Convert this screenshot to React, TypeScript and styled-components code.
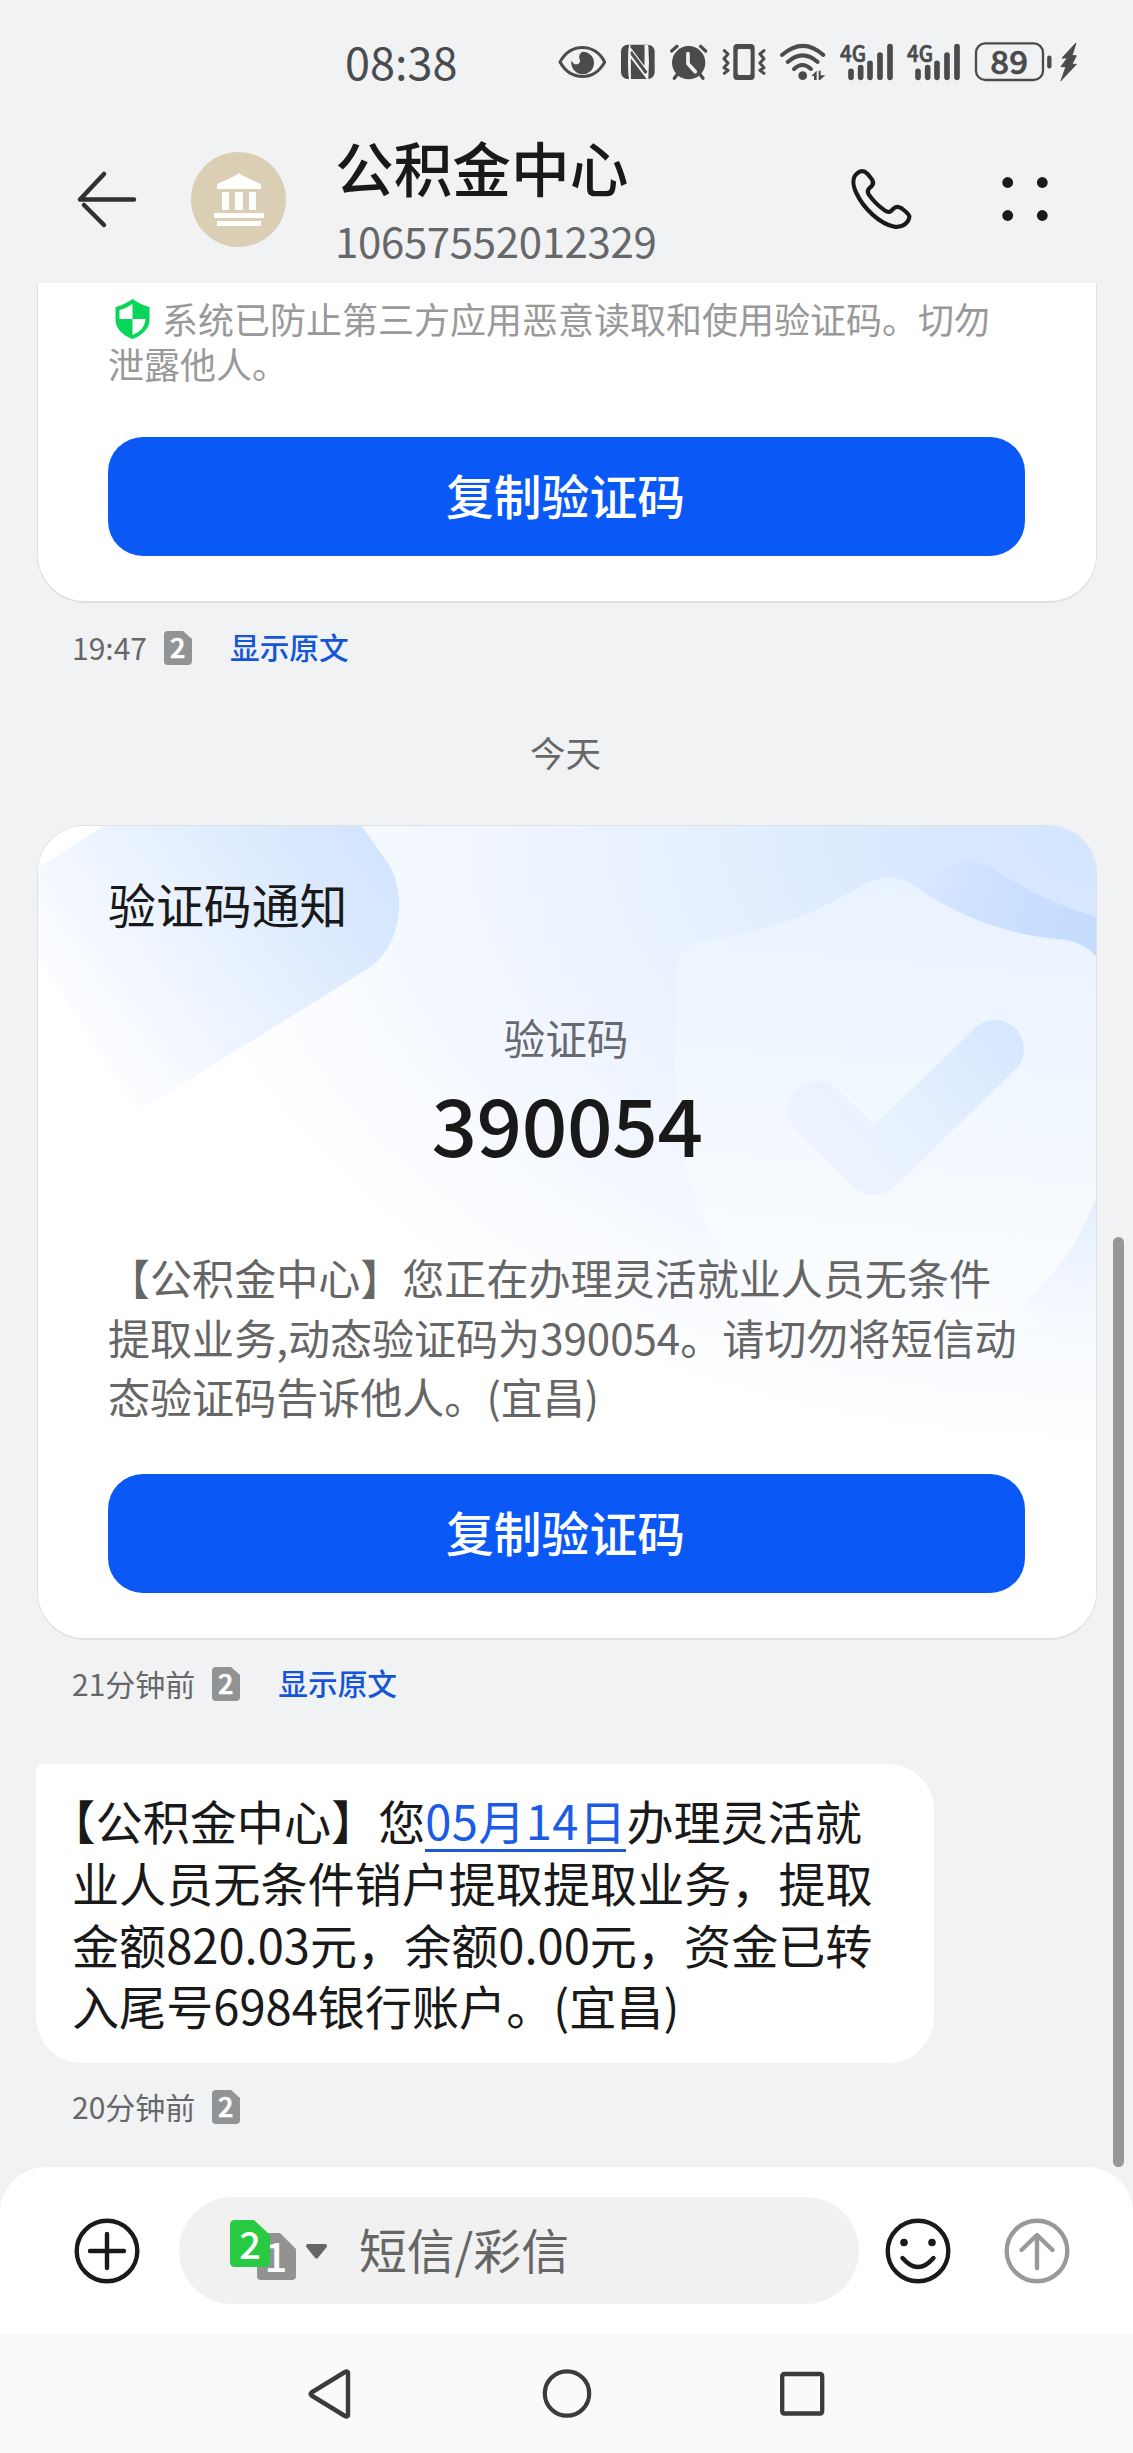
import React from "react";
import styled, { createGlobalStyle } from "styled-components";

const cjk = '"Noto Sans CJK SC", "Noto Sans", sans-serif';

const Global = createGlobalStyle`
  * { box-sizing: border-box; }
  body { margin: 0; background: #f1f2f4; }
  svg { display: block; flex: none; overflow: visible; }
`;

const Screen = styled.main`
  display: flex;
  flex-direction: column;
  width: 1133px;
  height: 2453px;
  overflow: hidden;
  background: #f1f2f4;
  font-family: ${cjk};
  font-weight: 400;
  color: #191919;
  white-space: nowrap;
`;

const StatusBar = styled.div`
  display: flex;
  align-items: flex-start;
  height: 120px;
  padding: 36px 43px 0 345px;
`;

const Clock = styled.div`
  width: 205px;
  height: 52px;
  line-height: 50px;
  font-size: 45px;
  color: #4a4b4d;
`;

const Header = styled.header`
  display: flex;
  align-items: center;
  height: 163px;
  padding-left: 74px;
`;

const BackButton = styled.button`
  padding: 0;
  margin-top: -4px;
  border: 0;
  background: none;
`;

const Avatar = styled.div`
  display: grid;
  place-items: center;
  width: 95px;
  height: 95px;
  margin: -4px 49px 0 55px;
  border-radius: 50%;
  background: #dacfb5;
`;

const Contact = styled.div`
  width: 500px;
  height: 163px;
`;

const Name = styled.h1`
  margin: 11px 0 0;
  font-size: 58.7px;
  font-weight: 500;
  line-height: 72px;
`;

const Phone = styled.div`
  margin-top: 12px;
  font-size: 42px;
  line-height: 50px;
  letter-spacing: -0.35px;
  color: #666769;
`;

const HeaderAction = styled.button<{ $left: number }>`
  padding: 0;
  border: 0;
  background: none;
  margin: -4px 0 0 ${(p) => p.$left}px;
`;

const Thread = styled.section`
  position: relative;
  height: 1884px;
  padding: 0 36px;
  overflow: hidden;
`;

const Card = styled.article<{ $cut?: boolean }>`
  position: relative;
  height: ${(p) => (p.$cut ? 320 : 815)}px;
  padding: ${(p) => (p.$cut ? 13 : 46)}px 70px 0;
  border: 1px solid #dfe1e4;
  border-bottom: 2px solid #e0e1e3;
  border-top-width: ${(p) => (p.$cut ? 0 : 1)}px;
  border-radius: ${(p) => (p.$cut ? "0 0 48px 48px" : "48px")};
  background: #fff;
  overflow: hidden;
  margin-left: 1px;
`;

const CardArt = styled.svg`
  position: absolute;
  left: 0;
  top: 0;
`;

const CardContent = styled.div`
  position: relative;
`;

const Notice = styled.p`
  margin: 0;
  height: 90px;
  font-size: 36px;
  line-height: 45px;
  color: #999;
`;

const InlineShield = styled.span`
  display: inline-block;
  vertical-align: -5px;
  width: 54px;
  padding-left: 7px;
  height: 40px;
`;

const CopyButton = styled.button<{ $gap: number }>`
  display: block;
  width: 917px;
  height: 119px;
  margin: ${(p) => p.$gap}px 0 0;
  padding: 0 2px 5px 0;
  border: 0;
  border-radius: 35px;
  background: #0a59f7;
  color: #fff;
  font-family: ${cjk};
  font-size: 47.8px;
  font-weight: 500;
`;

const CardTitle = styled.h2`
  margin: 0;
  font-size: 47.9px;
  font-weight: 400;
  line-height: 62px;
`;

const CodeLabel = styled.div`
  margin-top: 73px;
  padding-right: 2px;
  text-align: center;
  font-size: 41.7px;
  line-height: 60px;
  color: #666a70;
`;

const Code = styled.div`
  margin-top: 10px;
  text-align: center;
  font-size: 80px;
  font-weight: 500;
  line-height: 90px;
  letter-spacing: -0.4px;
`;

const CardBody = styled.p`
  margin: 80px 0 0;
  font-size: 42.05px;
  line-height: 59.7px;
  color: #666;
`;

const Meta = styled.div<{ $top: number }>`
  display: flex;
  align-items: center;
  height: 36px;
  margin-top: ${(p) => p.$top}px;
  padding-left: 36px;
  font-size: 30px;
  line-height: 36px;
  color: #666769;
`;

const MetaTime = styled.span`
  padding-bottom: 4px;
`;

const SimWrap = styled.span`
  margin: -2px 38px 0 17px;
`;

const ShowOriginal = styled.a`
  padding-bottom: 4px;
  color: #1555d8;
  font-weight: 500;
  font-size: 29.7px;
`;

const Day = styled.div`
  height: 50px;
  margin: 60px 0 48px;
  padding-right: 2px;
  text-align: center;
  font-size: 35.5px;
  line-height: 50px;
  color: #666769;
`;

const Bubble = styled.p`
  width: 898px;
  height: 299px;
  margin: 61px 0 0;
  padding: 25px 36px 0;
  border-radius: 6px 46px 46px 46px;
  background: #fff;
  font-size: 47.1px;
  line-height: 61.8px;
`;

const HalfOpening = styled.span`
  margin-left: -0.5em;
`;

const DateLink = styled.a`
  color: #1a5ce6;
  letter-spacing: 0.4px;
  box-shadow: 0 3px 0 #1a5ad6;
  display: inline-block;
  height: 60px;
  vertical-align: top;
`;

const Scrollbar = styled.i`
  position: absolute;
  right: 9px;
  top: 954px;
  width: 11px;
  height: 930px;
  border-radius: 6px;
  background: #969799;
`;

const Composer = styled.footer`
  display: flex;
  align-items: center;
  height: 167px;
  padding-left: 74px;
  border-radius: 46px 46px 0 0;
  background: #fff;
`;

const Field = styled.div`
  display: flex;
  align-items: center;
  width: 680px;
  height: 107px;
  margin: 0 26px 0 39px;
  padding-left: 51px;
  border-radius: 54px;
  background: #f1f1f1;
`;

const SimPicker = styled.span`
  margin-top: -10px;
`;

const Placeholder = styled.span`
  margin: -5px 0 0 32px;
  font-size: 47.8px;
  color: #666;
`;

const SendSlot = styled.span`
  margin-left: 53px;
`;

const NavBar = styled.nav`
  display: flex;
  align-items: center;
  height: 119px;
  padding: 1px 0 0 307px;
  background: #fafafa;
`;

const NavItem = styled.span<{ $gap?: number }>`
  margin-left: ${(p) => p.$gap ?? 0}px;
`;

const ink = "#4a4b4d";

const EyeIcon = () => (
  <svg width="63.3" height="52" viewBox="0 0 190 156">
    <path d="M30 78C62 20 134 20 164 78C134 136 62 136 30 78Z" fill="none" stroke={ink} strokeWidth="9" strokeLinejoin="round" />
    <path d="M97 47A34 34 0 1 1 65 73Q70 89 84 84Q94 80 88 67Q85 55 97 47Z" fill={ink} />
  </svg>
);

const NfcIcon = () => (
  <svg width="48.3" height="52" viewBox="190 0 145 156">
    <rect x="214" y="26" width="101" height="103" rx="20" fill={ink} />
    <path d="M238 27Q232 78 238 129H252L243 113V66L291 129H296Q300 78 296 27H284V89L243 34V27Z" fill="#f1f2f4" />
    <path d="M243 34V27H284V83Z" fill={ink} />
    <path d="M244 129V74L285 129Z" fill={ink} />
    <path d="M243 48L290 111" stroke={ink} strokeWidth="9" />
    <path d="M240 36V121" stroke="#f1f2f4" strokeWidth="6" />
  </svg>
);

const AlarmIcon = () => (
  <svg width="53.3" height="52" viewBox="335 0 160 156">
    <circle cx="415" cy="80" r="50" fill={ink} />
    <path d="M364 45L380 31M451 31L466 45M380 116L372 127M450 116L458 127" stroke={ink} strokeWidth="10" strokeLinecap="round" />
    <path d="M413 53V83L435 107" fill="none" stroke="#f1f2f4" strokeWidth="11" strokeLinecap="round" strokeLinejoin="round" />
  </svg>
);

const VibrateIcon = () => (
  <svg width="58.3" height="52" viewBox="495 0 175 156">
    <path fillRule="evenodd" d="M561 24H603Q614 24 614 36V120Q614 132 603 132H561Q550 132 550 120V36Q550 24 561 24ZM567 39Q563 39 563 44V112Q563 117 567 117H598Q602 117 602 112V44Q602 39 598 39Z" fill={ink} />
    <path d="M523 44L534 54L522 68L534 81L522 95L534 103L523 112M642 44L630 54L642 68L630 81L642 95L630 103L642 112" fill="none" stroke={ink} strokeWidth="9" strokeLinecap="round" strokeLinejoin="round" />
  </svg>
);

const WifiIcon = () => (
  <svg width="56.7" height="52" viewBox="670 0 170 156">
    <path d="M697 57Q760 2 821 57M714 78Q759 38 804 78M733 99Q758 75 784 99" fill="none" stroke={ink} strokeWidth="12" strokeLinecap="round" />
    <circle cx="759" cy="119" r="13" fill={ink} />
    <path d="M785 120L801 104V132H793V120ZM807 104H813V118H827L811 132H807Z" fill={ink} />
  </svg>
);

const SignalIcon = ({ width }: { width: number }) => (
  <svg width={width / 3} height="52" viewBox={`0 0 ${width} 156`}>
    <text x="30" y="77" fontFamily={cjk} fontWeight="500" fontSize="69" textLength="78" lengthAdjust="spacingAndGlyphs" fill={ink} stroke={ink} strokeWidth="2">4G</text>
    <path d="M63 106V124M92 95V124M120 82V124M150 57V124M180 32V124" stroke={ink} strokeWidth="17" strokeLinecap="round" />
  </svg>
);

const BatteryIcon = () => (
  <svg width="90" height="52" viewBox="410 0 270 156">
    <rect x="437" y="22" width="201" height="110" rx="28" fill="none" stroke={ink} strokeWidth="7" />
    <path d="M657 65V91" stroke={ink} strokeWidth="13" strokeLinecap="round" />
    <text x="480" y="113" fontFamily={cjk} fontWeight="500" fontSize="97" textLength="113" lengthAdjust="spacingAndGlyphs" fill={ink} stroke={ink} strokeWidth="2">89</text>
  </svg>
);

const BoltIcon = () => (
  <svg width="33.3" height="52" viewBox="680 0 100 156">
    <path d="M737 21L695 66H711L692 92H707L692 134L738 85H725L738 59H725Z" fill={ink} stroke={ink} strokeWidth="3" strokeLinejoin="round" />
  </svg>
);

const BackIcon = () => (
  <svg width="62" height="58" viewBox="0 0 62 58" fill="none" stroke="#303133" strokeWidth="4.5" strokeLinecap="round" strokeLinejoin="round">
    <path d="M30 3L6 28.500H60M10 34L30 54" />
  </svg>
);

const BankIcon = () => (
  <svg width="52" height="54" viewBox="0 0 52 54" fill="#fff">
    <path d="M26 0Q29 3 48 11V16H4V11Q23 3 26 0ZM9 19H16V37H9ZM22 19H30V37H22ZM36 19H43V37H36ZM1 40H51V45H1ZM4 48H48V53H4Z" />
  </svg>
);

const CallIcon = () => (
  <svg width="70" height="70" viewBox="200 105 210 210" fill="none" stroke="#191a1c" strokeWidth="12.5" strokeLinejoin="round">
    <path d="M232 129C215 141 217 166 228 189C250 236 298 281 342 290C365 294 386 278 387 260C386 250 374 243 362 234Q350 226 339 236L333 242Q325 250 313 241C293 227 276 209 265 193Q259 183 267 175L275 167Q282 158 274 147L261 131Q247 117 232 129Z" />
  </svg>
);

const MoreIcon = () => (
  <svg width="46" height="46" viewBox="0 0 46 46" fill="#191a1c">
    <circle cx="5.7" cy="5.5" r="5.4" /><circle cx="40.3" cy="5.5" r="5.4" />
    <circle cx="5.7" cy="38.5" r="5.4" /><circle cx="40.3" cy="38.5" r="5.4" />
  </svg>
);

const ShieldIcon = () => (
  <svg width="35" height="40" viewBox="0 0 35 40">
    <path d="M17.500 0Q24 5 34.500 8V22Q33 34 17.500 40Q2 34 .5 22V8Q11 5 17.500 0Z" fill="#08d65b" />
    <path d="M17.500 5V20H4.500V11Q12 9 17.500 5ZM17.500 20H30.500Q30 31 17.500 36Z" fill="#fff" />
  </svg>
);

const SimBadge = () => (
  <svg width="28" height="34" viewBox="0 0 28 34">
    <path d="M4 0H19L28 8V30Q28 34 24 34H4Q0 34 0 30V4Q0 0 4 0Z" fill="#929394" />
    <text x="13.700" y="27" textAnchor="middle" fontFamily={cjk} fontWeight="500" fontSize="27" fill="#fff" stroke="#fff" strokeWidth=".6">2</text>
  </svg>
);

const SimSwitch = () => (
  <svg width="97" height="71" viewBox="0 0 97 71">
    <path d="M32 23H50L66 39V66Q66 70 62 70H31Q27 70 27 66V28Q27 23 32 23Z" fill="#929292" />
    <text x="46" y="62" textAnchor="middle" fontFamily={cjk} fontWeight="500" fontSize="40" fill="#fff">1</text>
    <path d="M5 10H24L40 25V52Q40 57 35 57H5Q0 57 0 52V15Q0 10 5 10Z" fill="#28ca42" />
    <text x="20" y="49" textAnchor="middle" fontFamily={cjk} fontWeight="500" fontSize="38" fill="#fff">2</text>
    <path d="M78 36H95L86.500 46.500Z" fill="#666" stroke="#666" strokeWidth="4" strokeLinejoin="round" />
  </svg>
);

const Ring = ({ color, children }: { color: string; children: React.ReactNode }) => (
  <svg width="66" height="66" viewBox="-33 -33 66 66" fill="none" stroke={color} strokeWidth="4.400" strokeLinecap="round" strokeLinejoin="round">
    <circle r="30.300" />
    {children}
  </svg>
);

/* Card backdrop: tinted tile on the left, overlapping shields with a tick on the right */
const Backdrop = () => (
  <CardArt width="1059" height="812" viewBox="38 826 1059 812">
    <defs>
      <radialGradient id="sky" gradientUnits="userSpaceOnUse" cx="0" cy="0" r="1" gradientTransform="translate(1110 830) scale(950 620)">
        <stop offset="0" stopColor="#d2e4ff" />
        <stop offset=".22" stopColor="#dae9ff" />
        <stop offset=".48" stopColor="#e8f1ff" />
        <stop offset=".75" stopColor="#f4f8ff" />
        <stop offset="1" stopColor="#fff" />
      </radialGradient>
      <linearGradient id="tile" gradientUnits="userSpaceOnUse" x1="390" y1="850" x2="80" y2="1080">
        <stop offset="0" stopColor="#d1e4ff" />
        <stop offset=".45" stopColor="#e6f0ff" />
        <stop offset=".8" stopColor="#f7faff" />
        <stop offset="1" stopColor="#fff" />
      </linearGradient>
      <linearGradient id="front" gradientUnits="userSpaceOnUse" x1="900" y1="880" x2="860" y2="1350">
        <stop offset="0" stopColor="#e9f2ff" />
        <stop offset=".5" stopColor="#f2f8ff" />
        <stop offset="1" stopColor="#fdfeff" />
      </linearGradient>
      <linearGradient id="back" gradientUnits="userSpaceOnUse" x1="1096" y1="930" x2="930" y2="870">
        <stop offset="0" stopColor="#c5dcff" />
        <stop offset=".65" stopColor="#cde0ff" />
        <stop offset="1" stopColor="#d8e7ff" />
      </linearGradient>
      <linearGradient id="lower" gradientUnits="userSpaceOnUse" x1="1096" y1="1190" x2="1040" y2="1340">
        <stop offset="0" stopColor="#e2eeff" />
        <stop offset="1" stopColor="#fafcff" />
      </linearGradient>
      <linearGradient id="tick" gradientUnits="userSpaceOnUse" x1="1015" y1="1040" x2="840" y2="1180">
        <stop offset="0" stopColor="#d6e8ff" />
        <stop offset=".55" stopColor="#e6f0ff" />
        <stop offset="1" stopColor="#edf4ff" />
      </linearGradient>
    </defs>
    <rect x="38" y="826" width="1059" height="812" fill="url(#sky)" />
    <path d="M38 868L105 825H361L389 865C407 896 401 946 369 968L137 1112L38 957Z" fill="url(#tile)" />
    <path d="M900 890L945 868Q975 853 1000 873Q1045 902 1097 917V1000H900Z" fill="url(#back)" />
    <path d="M1097 1150V1275Q1050 1330 980 1345Z" fill="url(#lower)" />
    <path d="M864 884Q888 872 910 883C954 914 1004 936 1067 940Q1085 944 1097 957V1195C1074 1265 1020 1312 970 1340Q895 1375 820 1340C740 1300 675 1210 675 1080V970Q678 942 708 940C768 932 815 914 864 884Z" fill="url(#front)" />
    <path d="M817 1110L874 1166L995 1049" fill="none" stroke="url(#tick)" strokeWidth="58" strokeLinecap="round" strokeLinejoin="round" />
  </CardArt>
);

const MetaRow = ({ time, top, original }: { time: string; top: number; original?: boolean }) => (
  <Meta $top={top}>
    <MetaTime>{time}</MetaTime>
    <SimWrap><SimBadge /></SimWrap>
    {original && <ShowOriginal>显示原文</ShowOriginal>}
  </Meta>
);

export default function App() {
  return (
    <Screen>
      <Global />
      <StatusBar>
        <Clock>08:38</Clock>
        <EyeIcon />
        <NfcIcon />
        <AlarmIcon />
        <VibrateIcon />
        <WifiIcon />
        <SignalIcon width={201} />
        <SignalIcon width={209} />
        <BatteryIcon />
        <BoltIcon />
      </StatusBar>
      <Header>
        <BackButton><BackIcon /></BackButton>
        <Avatar><BankIcon /></Avatar>
        <Contact>
          <Name>公积金中心</Name>
          <Phone>10657552012329</Phone>
        </Contact>
        <HeaderAction $left={12}><CallIcon /></HeaderAction>
        <HeaderAction $left={85}><MoreIcon /></HeaderAction>
      </Header>
      <Thread>
        <Card $cut>
          <Notice>
            <InlineShield><ShieldIcon /></InlineShield>系统已防止第三方应用恶意读取和使用验证码。切勿<br />泄露他人。
          </Notice>
          <CopyButton $gap={51}>复制验证码</CopyButton>
        </Card>
        <MetaRow time="19:47" top={28} original />
        <Day>今天</Day>
        <Card>
          <Backdrop />
          <CardContent>
            <CardTitle>验证码通知</CardTitle>
            <CodeLabel>验证码</CodeLabel>
            <Code>390054</Code>
            <CardBody>
              【公积金中心】您正在办理灵活就业人员无条件<br />
              提取业务,动态验证码为390054。请切勿将短信动<br />
              态验证码告诉他人。(宜昌)
            </CardBody>
            <CopyButton $gap={48}>复制验证码</CopyButton>
          </CardContent>
        </Card>
        <MetaRow time="21分钟前" top={27} original />
        <Bubble>
          <HalfOpening>【</HalfOpening>公积金中心】您<DateLink>05月14日</DateLink>办理灵活就<br />
          业人员无条件销户提取提取业务，提取<br />
          金额820.03元，余额0.00元，资金已转<br />
          入尾号6984银行账户。(宜昌)
        </Bubble>
        <MetaRow time="20分钟前" top={27} />
        <Scrollbar />
      </Thread>
      <Composer>
        <Ring color="#191a1c"><path d="M0 -17V17M-17 0H17" /></Ring>
        <Field>
          <SimPicker><SimSwitch /></SimPicker>
          <Placeholder>短信/彩信</Placeholder>
        </Field>
        <Ring color="#191a1c">
          <path d="M-15.500 7Q0 25 15.500 7" />
          <circle cx="-14" cy="-8.500" r="3.800" fill="#191a1c" stroke="none" />
          <circle cx="14" cy="-8.500" r="3.800" fill="#191a1c" stroke="none" />
        </Ring>
        <SendSlot>
          <Ring color="#999"><path d="M0 17V-15M-15.500 -1L0 -16L15.500 -1" /></Ring>
        </SendSlot>
      </Composer>
      <NavBar>
        <NavItem>
          <svg width="46" height="50" viewBox="0 0 46 50"><path d="M41 3.500V46.500Q40 48 38 47L4.500 26.500Q3 25 4.500 23.500L38 3Q40 2 41 3.500Z" fill="none" stroke="#3b3b3b" strokeWidth="4.400" strokeLinejoin="round" /></svg>
        </NavItem>
        <NavItem $gap={189}>
          <svg width="50" height="50" viewBox="0 0 50 50"><circle cx="25" cy="24.500" r="22.200" fill="none" stroke="#3b3b3b" strokeWidth="4.200" /></svg>
        </NavItem>
        <NavItem $gap={188}>
          <svg width="46" height="46" viewBox="0 0 46 46"><rect x="2.200" y="3" width="40" height="39.500" rx="2" fill="none" stroke="#3b3b3b" strokeWidth="4.300" /></svg>
        </NavItem>
      </NavBar>
    </Screen>
  );
}
